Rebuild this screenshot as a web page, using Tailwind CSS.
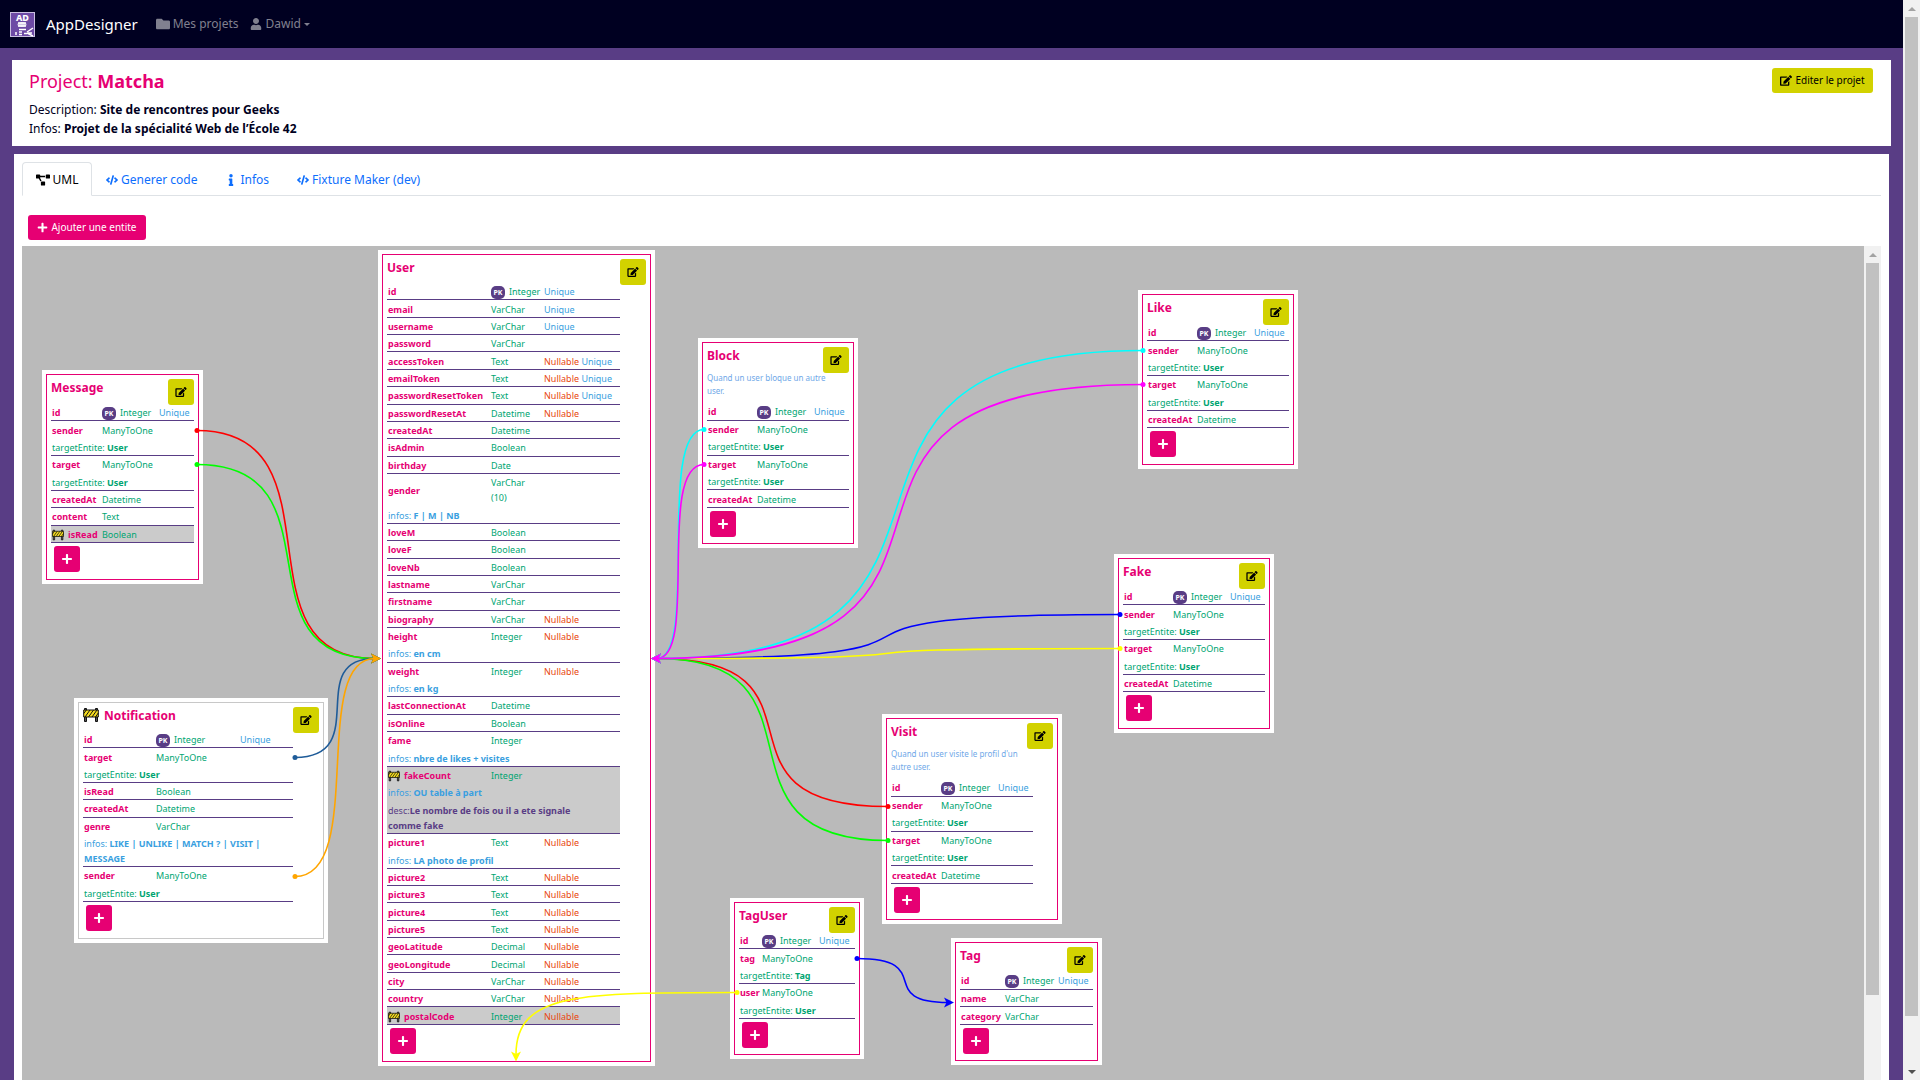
<!DOCTYPE html>
<html lang="fr">
<head>
<meta charset="utf-8">
<title>AppDesigner - Matcha</title>
<script src="https://cdn.jsdelivr.net/npm/@tailwindcss/browser@4"></script>
</head>
<body class="h-screen overflow-hidden bg-[#593d85] font-['Noto_Sans',sans-serif] text-[#000021]">
<svg class="hidden" aria-hidden="true">
  <symbol id="i-edit" viewBox="0 0 576 512"><path d="M402.6 83.2l90.2 90.2c3.8 3.8 3.8 10 0 13.8L274.4 405.6l-92.8 10.3c-12.4 1.4-22.9-9.1-21.5-21.5l10.3-92.8L388.8 83.2c3.8-3.8 10-3.8 13.8 0zm162-22.9l-48.8-48.8c-15.2-15.2-39.9-15.2-55.2 0l-35.4 35.4c-3.8 3.8-3.8 10 0 13.8l90.2 90.2c3.8 3.8 10 3.8 13.8 0l35.4-35.4c15.2-15.3 15.2-40 0-55.2zM384 346.2V448H64V128h229.8c3.2 0 6.2-1.3 8.5-3.5l40-40c7.6-7.6 2.2-20.5-8.5-20.5H48C21.5 64 0 85.5 0 112v352c0 26.5 21.5 48 48 48h352c26.5 0 48-21.5 48-48V306.2c0-10.7-12.9-16-20.5-8.5l-40 40c-2.2 2.3-3.5 5.3-3.5 8.5z"/></symbol>
  <symbol id="i-folder" viewBox="0 0 512 512"><path d="M464 128H272l-64-64H48C21.49 64 0 85.49 0 112v288c0 26.51 21.49 48 48 48h416c26.51 0 48-21.49 48-48V176c0-26.51-21.49-48-48-48z"/></symbol>
  <symbol id="i-user" viewBox="0 0 448 512"><path d="M224 256c70.7 0 128-57.3 128-128S294.7 0 224 0 96 57.3 96 128s57.3 128 128 128zm89.6 32h-16.7c-22.2 10.2-46.9 16-72.9 16s-50.6-5.8-72.9-16h-16.7C60.2 288 0 348.2 0 422.4V464c0 26.5 21.5 48 48 48h352c26.5 0 48-21.5 48-48v-41.6c0-74.2-60.2-134.4-134.4-134.4z"/></symbol>
  <symbol id="i-code" viewBox="0 0 640 512"><path d="M278.9 511.5l-61-17.7c-6.4-1.8-10-8.5-8.2-14.9L346.2 8.7c1.8-6.4 8.5-10 14.9-8.2l61 17.7c6.4 1.8 10 8.5 8.2 14.9L293.8 503.3c-1.9 6.4-8.5 10.1-14.9 8.2zm-114-112.2l43.5-46.4c4.6-4.9 4.3-12.7-.8-17.2L117 256l90.6-79.7c5.1-4.5 5.5-12.3.8-17.2l-43.5-46.4c-4.5-4.8-12.1-5.1-17-.5L3.8 247.2c-5.1 4.7-5.1 12.8 0 17.5l144.1 135.1c4.9 4.6 12.5 4.4 17-.5zm327.2.6l144.1-135.1c5.1-4.7 5.1-12.8 0-17.5L492.1 112.1c-4.8-4.5-12.4-4.3-17 .5L431.6 159c-4.6 4.9-4.3 12.7.8 17.2L523 256l-90.6 79.7c-5.1 4.5-5.5 12.3-.8 17.2l43.5 46.4c4.5 4.9 12.1 5.1 17 .6z"/></symbol>
  <symbol id="i-info" viewBox="0 0 192 512"><path d="M20 424.229h20V279.771H20c-11.046 0-20-8.954-20-20V212c0-11.046 8.954-20 20-20h112c11.046 0 20 8.954 20 20v212.229h20c11.046 0 20 8.954 20 20V492c0 11.046-8.954 20-20 20H20c-11.046 0-20-8.954-20-20v-47.771c0-11.046 8.954-20 20-20zM96 0C56.235 0 24 32.235 24 72s32.235 72 72 72 72-32.235 72-72S135.764 0 96 0z"/></symbol>
  <symbol id="i-diagram" viewBox="0 0 640 512"><path d="M384 320H256c-17.67 0-32 14.33-32 32v128c0 17.67 14.33 32 32 32h128c17.67 0 32-14.33 32-32V352c0-17.67-14.33-32-32-32zM192 32c0-17.67-14.33-32-32-32H32C14.33 0 0 14.33 0 32v128c0 17.67 14.33 32 32 32h95.72l73.16 128.04C211.98 300.98 232.4 288 256 288h.28L192 175.51V128h224V64H192V32zM608 0H480c-17.67 0-32 14.33-32 32v128c0 17.67 14.33 32 32 32h128c17.67 0 32-14.33 32-32V32c0-17.67-14.33-32-32-32z"/></symbol>
  <symbol id="i-plus" viewBox="0 0 448 512"><path d="M416 208H272V64c0-17.67-14.33-32-32-32h-32c-17.67 0-32 14.33-32 32v144H32c-17.67 0-32 14.33-32 32v32c0 17.67 14.33 32 32 32h144v144c0 17.67 14.33 32 32 32h32c17.67 0 32-14.33 32-32V304h144c17.67 0 32-14.33 32-32v-32c0-17.67-14.33-32-32-32z"/></symbol>
  <symbol id="i-barrier" viewBox="0 0 16 15"><path d="M1.5 1h2v13h-2zM12.5 1h2v13h-2z" fill="#555" stroke="#111"/><path d="M.7 2.5h14.6v7H.7z" fill="#f5dc1e" stroke="#111"/><path d="M2 9.500l5-7M5.500 9.500l5-7M9 9.500l5-7M12.500 9.500l2.800-4M.8 6l2.500-3.500" stroke="#111" stroke-width="1" fill="none"/></symbol>
</svg>
<div class="flex h-full">
  <div class="min-w-0 flex-1">
    <nav class="flex h-12 items-center bg-[#000021] pl-2.5 text-[#80808f]">
      <svg class="h-[25px] w-[25px]" viewBox="0 0 25 25">
        <rect x=".5" y=".5" width="24" height="24" fill="#6d4aa5" stroke="#c9bfe0"/>
        <text x="12.500" y="9" text-anchor="middle" font-family="Noto Sans" font-weight="800" font-size="9" fill="#fff">AD</text>
        <g fill="none" stroke="#fff" stroke-width="1.500"><path d="M8 11h8M8 14h8M9 17.500h7M6 20v3M9 20h3M9 22.500h3M14 21.500h3M17 20l6-4M17 21l6 3M18 21h4"/></g>
        <ellipse cx="12" cy="12.500" rx="4.500" ry="2.500" fill="#fff" fill-opacity=".7"/>
      </svg>
      <a href="#" class="ml-[11px] text-[15px] text-white">AppDesigner</a>
      <a href="#" class="ml-[18px] flex items-center gap-[3px] text-xs"><svg class="size-3.5" fill="currentColor"><use href="#i-folder"/></svg>Mes projets</a>
      <a href="#" class="ml-3 flex items-center gap-[3px] text-xs"><svg class="size-3" fill="currentColor"><use href="#i-user"/></svg>Dawid<span class="border-x-[3px] border-t-[3px] border-x-transparent border-t-current"></span></a>
    </nav>
    <header class="mx-3 mt-3 flex h-[86px] items-start justify-between bg-white pr-[18px] pl-[17px]">
      <div class="pt-[9px]">
        <h1 class="text-lg leading-6 text-[#e60073]">Project: <strong class="font-bold">Matcha</strong></h1>
        <p class="mt-[7px] text-xs leading-[19px]">Description: <strong class="font-bold">Site de rencontres pour Geeks</strong></p>
        <p class="text-xs leading-[19px]">Infos: <strong class="font-bold">Projet de la spécialité Web de l’École 42</strong></p>
      </div>
      <button class="mt-2 flex h-[25px] w-[101px] items-center justify-center gap-[3px] rounded-[3px] bg-[#d2d200] text-[10px] text-black"><svg class="h-[11px] w-3" fill="currentColor"><use href="#i-edit"/></svg>Editer le projet</button>
    </header>
    <main class="mx-3.5 mt-2 bg-white px-2 pt-2">
      <div role="tablist" class="flex h-[34px] border-b border-[#dee2e6] text-xs text-[#0d6efd]">
        <a href="#" role="tab" class="-mb-px flex w-[70px] items-center justify-center gap-[3px] rounded-t border border-b-white border-[#dee2e6] pt-0.5 text-black"><svg class="h-3 w-3.5" fill="currentColor"><use href="#i-diagram"/></svg>UML</a>
        <a href="#" role="tab" class="flex items-center gap-[3px] pt-0.5 pl-3.5"><svg class="h-3 w-3" fill="currentColor"><use href="#i-code"/></svg>Generer code</a>
        <a href="#" role="tab" class="flex items-center gap-[3px] pt-0.5 pl-7"><svg class="h-3 w-3" fill="currentColor"><use href="#i-info"/></svg>Infos</a>
        <a href="#" role="tab" class="flex items-center gap-[3px] pt-0.5 pl-7"><svg class="h-3 w-3" fill="currentColor"><use href="#i-code"/></svg>Fixture Maker (dev)</a>
      </div>
      <button class="mt-[19px] ml-1.5 flex h-[25px] w-[118px] items-center justify-center gap-[3px] rounded-[3px] bg-[#e60073] text-[10px] text-white"><svg class="size-[11px]" fill="currentColor"><use href="#i-plus"/></svg>Ajouter une entite</button>
      <div class="mt-1.5 flex h-[1000px]">
        <section id="canvas" aria-label="UML" class="relative min-w-0 flex-1 overflow-hidden bg-[#bababa]"></section>
        <div class="flex w-[17px] flex-col items-center bg-[#f1f1f1]">
          <span class="mt-[7px] mb-1.5 border-x-4 border-b-4 border-x-transparent border-b-[#a3a3a3]"></span>
          <span class="h-[732px] w-[13px] bg-[#c1c1c1]"></span>
        </div>
      </div>
    </main>
  </div>
  <div class="flex w-[17px] flex-col items-center bg-[#f1f1f1]">
    <span class="mt-[7px] mb-1.5 border-x-4 border-b-4 border-x-transparent border-b-[#a3a3a3]"></span>
    <span class="w-[13px] flex-1 bg-[#c1c1c1]"></span>
    <span class="mt-[54px] mb-1.5 border-x-4 border-t-4 border-x-transparent border-t-[#505050]"></span>
  </div>
</div>
<script>
const ORIGIN = { x: 22, y: 246 };
const U = 'Unique', N = 'Nullable';
const ID = ['id', 'Integer', U, { pk: true }];
const rel = (name, target = 'User') => [name, 'ManyToOne', '', { target }];
const PAIR = [ID, rel('sender'), rel('target'), ['createdAt', 'Datetime']];

// x, y, w, h: box on the canvas; tw, th: table size; cols: first two column widths
const entities = [
  { title: 'User', wide: true, x: 378, y: 250, w: 277, h: 816, tw: 233, th: 742, cols: [103, 53], rows: [
    ID, ['email', 'VarChar', U], ['username', 'VarChar', U], ['password', 'VarChar'],
    ['accessToken', 'Text', N + ' ' + U], ['emailToken', 'Text', N + ' ' + U], ['passwordResetToken', 'Text', N + ' ' + U],
    ['passwordResetAt', 'Datetime', N], ['createdAt', 'Datetime'], ['isAdmin', 'Boolean'], ['birthday', 'Date'],
    ['gender', 'VarChar<br>(10)', '', { infos: 'F | M | NB' }],
    ['loveM', 'Boolean'], ['loveF', 'Boolean'], ['loveNb', 'Boolean'], ['lastname', 'VarChar'], ['firstname', 'VarChar'],
    ['biography', 'VarChar', N], ['height', 'Integer', N, { infos: 'en cm' }], ['weight', 'Integer', N, { infos: 'en kg' }],
    ['lastConnectionAt', 'Datetime'], ['isOnline', 'Boolean'], ['fame', 'Integer', '', { infos: 'nbre de likes + visites' }],
    ['fakeCount', 'Integer', '', { wip: true, infos: 'OU table à part', desc: 'Le nombre de fois ou il a ete signale comme fake' }],
    ['picture1', 'Text', N, { infos: 'LA photo de profil' }], ['picture2', 'Text', N], ['picture3', 'Text', N],
    ['picture4', 'Text', N], ['picture5', 'Text', N], ['geoLatitude', 'Decimal', N], ['geoLongitude', 'Decimal', N],
    ['city', 'VarChar', N], ['country', 'VarChar', N], ['postalCode', 'Integer', N, { wip: true }]] },
  { title: 'Message', x: 42, y: 370, w: 161, h: 214, tw: 143, th: 139, cols: [50, 57], rows: [
    ID, rel('sender'), rel('target'), ['createdAt', 'Datetime'], ['content', 'Text'], ['isRead', 'Boolean', '', { wip: true }]] },
  { title: 'Notification', wide: true, wip: true, x: 74, y: 698, w: 254, h: 245, tw: 210, th: 171, cols: [72, 84], rows: [
    ID, rel('target'), ['isRead', 'Boolean'], ['createdAt', 'Datetime'],
    ['genre', 'VarChar', '', { infos: 'LIKE | UNLIKE | MATCH ? | VISIT | MESSAGE' }], rel('sender')] },
  { title: 'Block', note: 'Quand un user bloque un autre user.', x: 698, y: 338, w: 160, h: 210, tw: 142, th: 105, cols: [49, 57], rows: PAIR },
  { title: 'Like', x: 1138, y: 290, w: 160, h: 179, tw: 142, th: 104, cols: [49, 57], rows: PAIR },
  { title: 'Fake', x: 1114, y: 554, w: 160, h: 179, tw: 142, th: 104, cols: [49, 57], rows: PAIR },
  { title: 'Visit', note: "Quand un user visite le profil d'un autre user.", x: 882, y: 714, w: 180, h: 210, tw: 142, th: 105, cols: [49, 57], rows: PAIR },
  { title: 'TagUser', x: 730, y: 898, w: 134, h: 161, tw: 116, th: 87, cols: [22, 57], rows: [ID, rel('tag', 'Tag'), rel('user')] },
  { title: 'Tag', x: 951, y: 938, w: 151, h: 127, tw: 133, th: 53, cols: [44, 53], rows: [ID, ['name', 'VarChar'], ['category', 'VarChar']] },
];

const flags = text => (text || '').split(' ').filter(Boolean)
  .map(f => f === N ? '<span class="text-[#e8470e]">Nullable</span>' : '<span class="text-[#3a9fe0]">Unique</span>').join(' ');
const line = last => last ? 'border-b border-[#593d85] pt-px pl-px' : 'py-px pl-px';
const sub = (html, last) => `<td colspan="3" class="${line(last)} pr-5">${html}</td>`;

function row([name, type, extra, o = {}]) {
  const subs = [];
  if (o.target) subs.push(`<span class="text-[#00a572]">targetEntite: <b>${o.target}</b></span>`);
  if (o.infos) subs.push(`<span class="text-[#3a9fe0]">infos: <b>${o.infos}</b></span>`);
  if (o.desc) subs.push(`<span class="text-[#593d85]">desc:<b>${o.desc}</b></span>`);
  const last = !subs.length, bg = o.wip ? 'bg-[#cbcbcb]' : 'bg-white';
  const icon = o.wip ? '<svg class="mr-1 inline-block h-3 w-3 align-middle"><use href="#i-barrier"/></svg>' : '';
  const pk = o.pk ? '<span class="mr-1 inline-block h-[13px] w-3.5 rounded-[5px] bg-[#593d85] text-center align-middle text-[7px] leading-[13px] font-bold text-white">PK</span>' : '';
  return `<tr class="${bg}">
    <th scope="row" class="${line(last)} text-left font-bold whitespace-nowrap text-[#e60073]">${icon}${name}</th>
    <td class="${line(last)} whitespace-nowrap text-[#00a572]">${pk}${type}</td>
    <td class="${line(last)} whitespace-nowrap">${flags(extra)}</td></tr>` +
    subs.map((s, i) => `<tr class="${bg}">${sub(s, i === subs.length - 1)}</tr>`).join('');
}

function entity(e) {
  return `<article class="absolute bg-white p-1" style="left:${e.x - ORIGIN.x}px;top:${e.y - ORIGIN.y}px;width:${e.w}px;height:${e.h}px">
    <div class="relative h-full border ${e.wip ? 'border-[#c8c8c8]' : 'border-[#e60073]'} p-1">
      <h2 class="flex ${e.wide ? 'h-6' : 'h-[25px]'} items-start gap-[5px] text-xs leading-[18px] font-bold text-[#e60073]">${e.wip ? '<svg class="h-4 w-4"><use href="#i-barrier"/></svg>' : ''}${e.title}</h2>
      <button aria-label="Editer ${e.title}" class="absolute top-1 right-1 flex size-[26px] items-center justify-center rounded-[3px] bg-[#d2d200] text-black"><svg class="h-2.5 w-3" fill="currentColor"><use href="#i-edit"/></svg></button>
      ${e.note ? `<p class="-mt-px mb-1.5 h-[26px] text-[8px] leading-[13px] text-[#6fa8e8]" style="width:${e.w - 36}px">${e.note}</p>` : ''}
      <table class="table-fixed border-separate border-spacing-0 text-[9px] leading-[15px]" style="width:${e.tw}px;height:${e.th}px">
        <colgroup><col style="width:${e.cols[0]}px"><col style="width:${e.cols[1]}px"><col></colgroup>
        <tbody>${e.rows.map(row).join('')}</tbody>
      </table>
      <button aria-label="Ajouter un attribut" class="mt-[3px] ml-[3px] flex size-[26px] items-center justify-center rounded-[3px] bg-[#e60073] text-white"><svg class="h-3 w-2.5" fill="currentColor"><use href="#i-plus"/></svg></button>
    </div>
  </article>`;
}

// [x1, y1, x2, y2, bend, colour]
const links = [
  [197, 430, 381, 658, 150, '#f00'], [197, 464, 381, 658, 148, '#0f0'],
  [295, 757, 381, 658, 78, '#1f5c99'], [295, 876, 381, 658, 72, '#ffa500'],
  [888, 806, 651, 658, 195, '#f00'], [888, 840, 651, 658, 190, '#0f0'],
  [1120, 614, 651, 658, 385, '#00f'], [1120, 648, 651, 658, 385, '#ff0'],
  [704, 429, 651, 658, 48, '#0ff'], [704, 464, 651, 658, 48, '#f0f'],
  [1143, 350, 651, 658, 388, '#0ff'], [1143, 384, 651, 658, 405, '#f0f'],
  [857, 958, 954, 1002, 80, '#00f'],
];
const head = (x, y, angle, c) => `<path d="M0 0l-10-5 2.500 5-2.500 5z" fill="${c}" transform="translate(${x} ${y}) rotate(${angle})"/>`;
const wires = links.map(([x1, y1, x2, y2, d, c]) => {
  const s = x2 > x1 ? 1 : -1;
  return `<path d="M${x1} ${y1}C${x1 + s * d} ${y1} ${x2 - s * d} ${y2} ${x2 - s * 6} ${y2}" fill="none" stroke="${c}" stroke-width="1.600"/>
    <circle cx="${x1}" cy="${y1}" r="2.500" fill="${c}"/>${head(x2, y2, s > 0 ? 0 : 180, c)}`;
}).join('') +
  `<path d="M737 992C580 992 516 992 516 1054" fill="none" stroke="#ff0" stroke-width="1.600"/><circle cx="737" cy="992" r="2.500" fill="#ff0"/>${head(516, 1061, 90, '#ff0')}`;

document.getElementById('canvas').innerHTML = entities.map(entity).join('') +
  `<svg class="pointer-events-none absolute top-0 left-0" width="1842" height="1000" viewBox="${ORIGIN.x} ${ORIGIN.y - 0.5} 1842 1000">${wires}</svg>`;
</script>
</body>
</html>
